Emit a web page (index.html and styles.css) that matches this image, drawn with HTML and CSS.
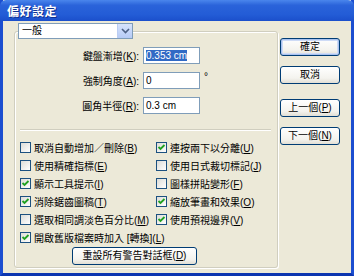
FILE: index.html
```html
<!DOCTYPE html>
<html lang="zh-Hant">

<head>
    <meta charset="UTF-8">
    <meta name="viewport" content="width=device-width, initial-scale=1.0">
    <title>偏好設定</title>
    <link rel="stylesheet" href="styles.css">
</head>

<body>

    <div class="window">
        <div class="titlebar">
            <span class="title">偏好設定</span>
        </div>

        <div class="body">
            <fieldset class="group">
                <legend class="combo">
                    <span class="combo-text">一般</span>
                    <span class="combo-btn">
                        <svg width="9" height="6" viewBox="0 0 9 6"><path d="M1 1 L4.5 4.5 L8 1" fill="none" stroke="#4D6185" stroke-width="1.6"/></svg>
                    </span>
                </legend>

                <div class="fields">
                    <label class="field-label">鍵盤漸增(<u>K</u>):</label>
                    <div class="textbox"><span class="selected">0.353 cm</span></div>
                    <span class="unit"></span>

                    <label class="field-label">強制角度(<u>A</u>):</label>
                    <div class="textbox">0</div>
                    <span class="unit">°</span>

                    <label class="field-label">圓角半徑(<u>R</u>):</label>
                    <div class="textbox">0.3 cm</div>
                    <span class="unit"></span>
                </div>

                <div class="separator"></div>

                <div class="checks">
                    <label class="check"><span class="box"></span><span>取消自動增加／刪除(<u>B</u>)</span></label>
                    <label class="check"><span class="box checked"></span><span>連按兩下以分離(<u>U</u>)</span></label>
                    <label class="check"><span class="box"></span><span>使用精確指標(<u>E</u>)</span></label>
                    <label class="check"><span class="box"></span><span>使用日式裁切標記(<u>J</u>)</span></label>
                    <label class="check"><span class="box checked"></span><span>顯示工具提示(<u>I</u>)</span></label>
                    <label class="check"><span class="box"></span><span>圖樣拼貼變形(<u>F</u>)</span></label>
                    <label class="check"><span class="box checked"></span><span>消除鋸齒圖稿(<u>T</u>)</span></label>
                    <label class="check"><span class="box checked"></span><span>縮放筆畫和效果(<u>O</u>)</span></label>
                    <label class="check"><span class="box"></span><span>選取相同調淡色百分比(<u>M</u>)</span></label>
                    <label class="check"><span class="box checked"></span><span>使用預視邊界(<u>V</u>)</span></label>
                    <label class="check full"><span class="box checked"></span><span>開啟舊版檔案時加入 [轉換](<u>L</u>)</span></label>
                </div>

                <button class="btn wide">重設所有警告對話框(<u>D</u>)</button>
            </fieldset>

            <div class="side">
                <button class="btn default">確定</button>
                <button class="btn">取消</button>
                <button class="btn gap">上一個(<u>P</u>)</button>
                <button class="btn">下一個(<u>N</u>)</button>
            </div>
        </div>
    </div>

</body>

</html>
```

FILE: styles.css
```css
body {
    margin: 0;
    font-family: "Liberation Sans", "Noto Sans CJK TC", sans-serif;
    font-size: 10px;
    color: #000;
}

.window {
    width: 354px;
    height: 276px;
    box-sizing: border-box;
    display: flex;
    flex-direction: column;
    background: #ECE9D8;
    border: 3px solid #1C4ED0;
    border-top: none;
    border-bottom-color: #0B35B0;
}

.titlebar {
    height: 21px;
    margin: 0 -3px;
    padding-left: 7px;
    display: flex;
    align-items: center;
    background: linear-gradient(#4A86EC 0%, #2A63DA 25%, #235CD6 70%, #1B4FCB 100%);
    border-radius: 6px 6px 0 0;
}

.title {
    color: #fff;
    font-size: 12px;
    font-weight: bold;
    letter-spacing: 0.5px;
    text-shadow: 1px 1px 0 #0F2F8F;
}

.body {
    flex: 1;
    display: flex;
    align-items: flex-start;
    padding: 1px 11px 0 11px;
}

.group {
    margin: 1px 0 0 0;
    padding: 0 6px 5px 6px;
    width: 264px;
    height: 245px;
    box-sizing: border-box;
    border: 1px solid #D0CEBF;
    border-radius: 3px;
    box-shadow: inset 1px 1px 0 #fff, 1px 1px 0 #fff;
}

.combo {
    margin-left: -3px;
    padding: 0;
    width: 115px;
    height: 16px;
    box-sizing: border-box;
    display: flex;
    align-items: center;
    background: #fff;
    border: 1px solid #7F9DB9;
}

.combo-text {
    flex: 1;
    padding-left: 3px;
    line-height: 14px;
}

.combo-btn {
    width: 14px;
    height: 14px;
    display: flex;
    align-items: center;
    justify-content: center;
    background: linear-gradient(#D6E3FC, #B6CBF6);
    border-left: 1px solid #BBCDF3;
}

.fields {
    display: grid;
    grid-template-columns: 118px 57px auto;
    column-gap: 4px;
    row-gap: 8px;
    margin-top: 8px;
}

.field-label {
    text-align: right;
    align-self: center;
}

.textbox {
    height: 17px;
    box-sizing: border-box;
    padding: 0 2px;
    background: #fff;
    border: 1px solid #7F9DB9;
    line-height: 15px;
    white-space: nowrap;
    overflow: hidden;
}

.selected {
    background: #316AC5;
    color: #fff;
}

.unit {
    align-self: start;
    line-height: 10px;
}

.separator {
    margin: 15px 0 0 -1px;
    border-top: 1px solid #D0CEBF;
    border-bottom: 1px solid #fff;
}

.checks {
    display: grid;
    grid-template-columns: 136px auto;
    grid-auto-rows: 18px;
    margin-top: 7px;
    margin-left: -1px;
}

.check {
    display: flex;
    align-items: center;
    gap: 3px;
    white-space: nowrap;
}

.check.full {
    grid-column: 1 / 3;
}

.box {
    width: 11px;
    height: 11px;
    box-sizing: border-box;
    border: 1px solid #1C5180;
    background: linear-gradient(135deg, #DCDCD7, #FFFFFF);
    flex-shrink: 0;
}

.box.checked {
    background:
        url("data:image/svg+xml,%3Csvg xmlns='http://www.w3.org/2000/svg' width='9' height='9'%3E%3Cpath d='M1.5 4 L3.5 6 L7.5 2' fill='none' stroke='%2321A121' stroke-width='1.8'/%3E%3C/svg%3E") center / 9px 9px no-repeat,
        linear-gradient(135deg, #DCDCD7, #FFFFFF);
}

.btn {
    height: 18px;
    padding: 0;
    font-family: inherit;
    font-size: 10px;
    color: #000;
    background: linear-gradient(#FFFFFF, #F4F3EE 70%, #E2DFD5);
    border: 1px solid #003C74;
    border-radius: 3px;
    line-height: 16px;
}

.btn.wide {
    display: block;
    width: 125px;
    margin: 1px 0 0 51px;
}

.btn.default {
    box-shadow: inset 0 0 0 1px #A9C2EF, inset 0 0 0 2px #CEDBF6;
}

.side {
    display: flex;
    flex-direction: column;
    gap: 10px;
    margin-left: 2px;
    padding-top: 16px;
}

.side .btn {
    width: 60px;
}

.side .btn.gap {
    margin-top: 5px;
}
```
